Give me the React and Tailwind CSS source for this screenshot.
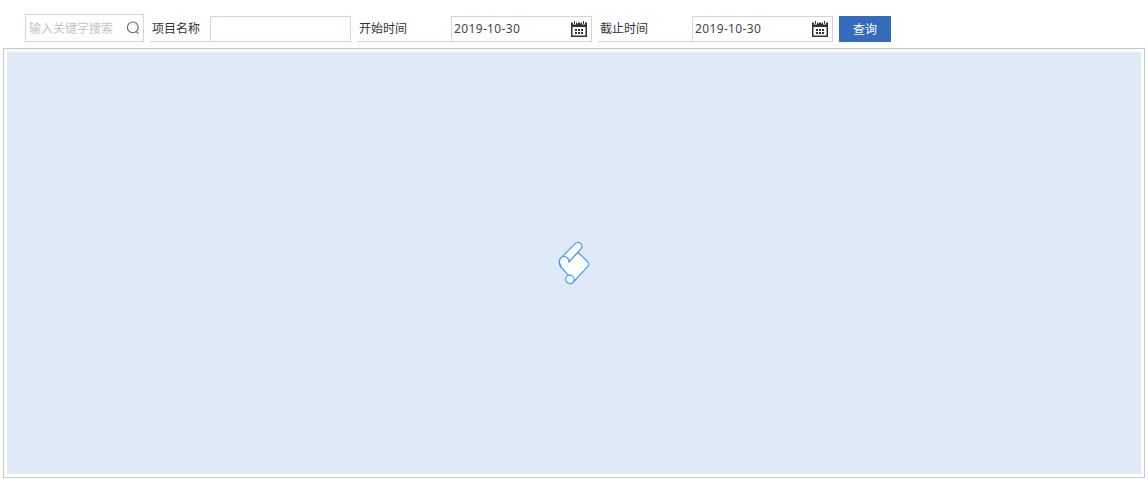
function SearchIcon() {
  return (
    <svg width="14" height="14" viewBox="0 0 14 14" fill="none" stroke="#666" strokeWidth="1.1">
      <circle cx="6.8" cy="6.4" r="5.4" />
      <path d="M9.8 10.4 12.6 12.6" />
    </svg>
  );
}

function CalendarIcon() {
  return (
    <svg width="16" height="16" viewBox="0 0 16 16">
      <path
        fillRule="evenodd"
        fill="#333"
        d="M0 1.5h2v2h3v-2h1v1h1v-1h2v1h1v-1h1v2h3v-2h2V16H0zM1.5 6v8.5h13V6z"
      />
      <path fill="#333" d="M3 0h1v3H3zM12 0h1v3h-1z" />
      <path
        fill="#333"
        d="M4 8h2v2H4zM7 8h2v2H7zM10 8h2v2h-2zM4 11h2v2H4zM7 11h2v2H7zM10 11h2v2h-2z"
      />
    </svg>
  );
}

function ScrollIcon() {
  return (
    <svg width="32" height="44" viewBox="0 0 32 44" fill="#fff" stroke="#409eff" strokeWidth="1.2" strokeLinejoin="round">
      <path d="M20 11.3 29.6 20.8Q31.8 23.2 29.6 25.6L15.4 41Q13.5 42.9 11.5 42.5L11 34.8 2.6 25.5Q.6 22.4 1.6 19L6 15.5 10.8 20.8Z" />
      <path
        stroke="none"
        d="M2.7 17 17 2.8C18.8 1.1 21.2 1.1 22.7 2.6 24.3 4.2 24.2 6.4 22.6 8.2L20.4 11.3 11.2 21.6 3 24.5Z"
      />
      <path
        fill="none"
        d="M3 16.8 17 2.8C18.8 1.1 21.2 1.1 22.7 2.6 24.3 4.2 24.2 6.4 22.6 8.2L10.9 21C10.9 18 9.3 15.6 6 15.6 3.2 15.6 1.4 17.5 1.4 20.3 1.4 22.2 1.9 24.5 3.6 26.6"
      />
      <circle cx="11.9" cy="38.3" r="4.2" />
    </svg>
  );
}

function Label({ children, className }) {
  return (
    <div className={`ml-1.5 flex h-[26px] items-center border-b border-[#d3d3e8] pb-px pl-0.5 text-[#333] ${className}`}>
      {children}
    </div>
  );
}

function Field({ value }) {
  return (
    <div className="flex h-[26px] w-[141px] items-center justify-between border border-[#d3d3e8] pr-1 pl-0.5 text-[#444]">
      {value && (
        <>
          <span className="font-['Noto_Sans',sans-serif] text-[12px] tracking-[0.36px]">{value}</span>
          <CalendarIcon />
        </>
      )}
    </div>
  );
}

export default function App() {
  return (
    <div className="flex h-[481px] w-[1148px] flex-col bg-white px-[3px] pt-3.5 pb-[3px] font-['Noto_Sans_CJK_SC',sans-serif] text-[12px] leading-[18px]">
      <div className="flex h-[34px] shrink-0 items-start pl-[22px]">
        <div className="flex h-7 w-[119px] items-center justify-between border border-[#d3d3e8] pr-[3px] pl-[3px] text-[#c4c4c4]">
          <span>输入关键字搜索</span>
          <SearchIcon />
        </div>
        <div className="flex pt-0.5">
          <Label className="w-[60px]">项目名称</Label>
          <Field />
          <Label className="w-[94px]">开始时间</Label>
          <Field value="2019-10-30" />
          <Label className="w-[94px]">截止时间</Label>
          <Field value="2019-10-30" />
          <button className="ml-1.5 h-[26px] w-[52px] bg-[#346bbd] text-white">查询</button>
        </div>
      </div>
      <div className="flex flex-1 border border-[#c8c8c8] p-[3px]">
        <div className="flex flex-1 items-center justify-center bg-[#e0e9f8]">
          <ScrollIcon />
        </div>
      </div>
    </div>
  );
}
